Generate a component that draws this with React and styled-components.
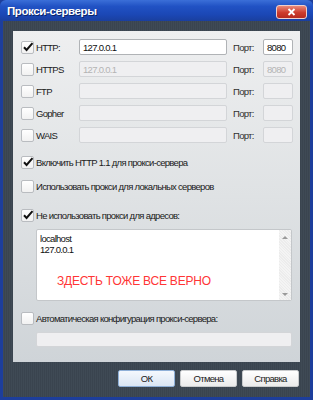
import React from 'react';
import styled, { createGlobalStyle } from 'styled-components';

const Global = createGlobalStyle`
  html, body { margin: 0; padding: 0; background: #3d4752; }
  * { box-sizing: border-box; }
`;

const Window = styled.div`
  width: 313px;
  height: 400px;
  display: flex;
  flex-direction: column;
  background: #1d3e9c;
  padding: 0 3px 3px;
  font-family: "Liberation Sans", Arial, sans-serif;
  color: #1e1e1e;
`;

const TitleBar = styled.div`
  height: 21px;
  margin: 0 -3px;
  padding: 0 6px 0 7px;
  display: flex;
  align-items: center;
  justify-content: space-between;
  background: linear-gradient(#3b6fd8 0%, #2152c4 30%, #1b47b5 70%, #1a3f9e 100%);
  border-radius: 6px 6px 0 0;
`;

const Title = styled.span`
  color: #fff;
  font-size: 11.5px;
  font-weight: bold;
  letter-spacing: -0.4px;
  text-shadow: 1px 1px 0 #0b2468;
`;

const CloseButton = styled.div`
  width: 31px;
  height: 14px;
  margin-top: 2px;
  border: 1px solid #f0d0cc;
  border-radius: 3px;
  background: linear-gradient(#e9897a, #cd3b2c 55%, #b72a1f);
  display: flex;
  align-items: center;
  justify-content: center;
`;

const Body = styled.div`
  flex: 1;
  display: flex;
  flex-direction: column;
  background: repeating-linear-gradient(90deg, #3f4a55 0 1px, #3a444f 1px 2px);
  padding: 10px 10px 0;
`;

const Panel = styled.div`
  height: 331px;
  display: flex;
  flex-direction: column;
  padding: 8px 7px 0 8px;
  background: linear-gradient(#eeeff0, #dfe2e4 50%, #cfd4d8);
`;

const ProtoRow = styled.div`
  display: flex;
  align-items: center;
  height: 16px;
  margin-bottom: 6px;
`;

const Box = styled.div`
  width: 13px;
  height: 13px;
  flex: none;
  background: linear-gradient(#ffffff, #f1f1f1);
  border: 1px solid #b9bcc0;
  border-radius: 2px;
  position: relative;
  margin-right: 2px;
`;

const small = `
  font-size: 9.5px;
  letter-spacing: -0.7px;
`;

const Label = styled.span`
  ${small}
  width: ${p => (p.$w ? `${p.$w}px` : 'auto')};
  flex: none;
  white-space: nowrap;
  color: #202020;
`;

const Field = styled.div`
  ${small}
  width: ${p => p.$w}px;
  height: ${p => p.$h || 16}px;
  flex: none;
  border: 1px solid ${p => (p.$on ? '#b0b3b6' : '#d3d5d8')};
  background: ${p => (p.$on ? '#ffffff' : '#efeff1')};
  border-radius: 2px;
  padding: 2px 3px;
  color: ${p => (p.$on ? '#111' : '#b4b4b4')};
  line-height: 11px;
`;

const PortLabel = styled.span`
  ${small}
  width: 30px;
  margin-left: 6px;
  flex: none;
  color: #303030;
`;

const OptRow = styled.div`
  display: flex;
  align-items: center;
  height: 13px;
  margin-top: ${p => p.$mt}px;
`;

const Indent = styled.div`
  margin-left: 15px;
  margin-top: ${p => p.$mt}px;
`;

const AreaBox = styled.div`
  width: 256px;
  height: 72px;
  background: #fff;
  border: 1px solid #c4c7ca;
  border-radius: 2px;
  display: flex;
`;

const AreaText = styled.div`
  ${small}
  flex: 1;
  padding: 3px 3px;
  line-height: 11px;
  color: #111;
  position: relative;
`;

const Stamp = styled.div`
  position: absolute;
  left: 20px;
  top: 46px;
  color: #ff3535;
  font-size: 12px;
  letter-spacing: -0.2px;
  white-space: nowrap;
`;

const Scroll = styled.div`
  width: 12px;
  background: repeating-linear-gradient(45deg, #f4f4f4 0 1px, #ececec 1px 2px);
  display: flex;
  flex-direction: column;
  justify-content: space-between;
  align-items: center;
  padding: 6px 0 4px;
`;

const Arrow = styled.div`
  width: 0;
  height: 0;
  border-left: 3px solid transparent;
  border-right: 3px solid transparent;
  ${p => (p.$down ? 'border-top: 3px solid #9a9a9a;' : 'border-bottom: 3px solid #9a9a9a;')}
`;

const Buttons = styled.div`
  display: flex;
  justify-content: flex-end;
  gap: 5px;
  padding: 8px 1px 0 0;
`;

const Button = styled.div`
  ${small}
  width: 57px;
  height: 17px;
  display: flex;
  align-items: center;
  justify-content: center;
  color: #222;
  border: 1px solid ${p => (p.$def ? '#8fb0d8' : '#c9cbcd')};
  background: ${p =>
    p.$def ? 'linear-gradient(#f4f8fd, #dbe6f4)' : 'linear-gradient(#ffffff, #ebebeb)'};
  border-radius: 2px;
`;

const Check = ({ on }) => (
  <Box>
    {on && (
      <svg width="12" height="12" viewBox="0 0 12 12" style={{ position: 'absolute', left: 0, top: -1 }}>
        <path d="M2 6.2 L4.6 9 L10.5 2.2" fill="none" stroke="#111" strokeWidth="2" />
      </svg>
    )}
  </Box>
);

const protos = [
  { name: 'HTTP:', on: true, host: '127.0.0.1', port: '8080', active: true },
  { name: 'HTTPS', on: false, host: '127.0.0.1', port: '8080' },
  { name: 'FTP', on: false },
  { name: 'Gopher', on: false },
  { name: 'WAIS', on: false },
];

export default function App() {
  return (
    <>
      <Global />
      <Window>
        <TitleBar>
          <Title>Прокси-серверы</Title>
          <CloseButton>
            <svg width="9" height="8" viewBox="0 0 9 8">
              <path d="M1.5 1 L7.5 7 M7.5 1 L1.5 7" stroke="#fff" strokeWidth="1.8" />
            </svg>
          </CloseButton>
        </TitleBar>
        <Body>
          <Panel>
            {protos.map(p => (
              <ProtoRow key={p.name}>
                <Check on={p.on} />
                <Label $w={43}>{p.name}</Label>
                <Field $w={148} $on={p.active}>{p.host}</Field>
                <PortLabel>Порт:</PortLabel>
                <Field $w={30} $on={p.active}>{p.port}</Field>
              </ProtoRow>
            ))}
            <OptRow $mt={7}>
              <Check on />
              <Label>Включить HTTP 1.1 для прокси-сервера</Label>
            </OptRow>
            <OptRow $mt={11}>
              <Check />
              <Label>Использовать прокси для локальных серверов</Label>
            </OptRow>
            <OptRow $mt={16}>
              <Check on />
              <Label>Не использовать прокси для адресов:</Label>
            </OptRow>
            <Indent $mt={7}>
              <AreaBox>
                <AreaText>
                  localhost
                  <br />
                  127.0.0.1
                  <Stamp>ЗДЕСТЬ ТОЖЕ ВСЕ ВЕРНО</Stamp>
                </AreaText>
                <Scroll>
                  <Arrow />
                  <Arrow $down />
                </Scroll>
              </AreaBox>
            </Indent>
            <OptRow $mt={11}>
              <Check />
              <Label>Автоматическая конфигурация прокси-сервера:</Label>
            </OptRow>
            <Indent $mt={7}>
              <Field $w={256} $h={15} />
            </Indent>
          </Panel>
          <Buttons>
            <Button $def>ОК</Button>
            <Button>Отмена</Button>
            <Button>Справка</Button>
          </Buttons>
        </Body>
      </Window>
    </>
  );
}
